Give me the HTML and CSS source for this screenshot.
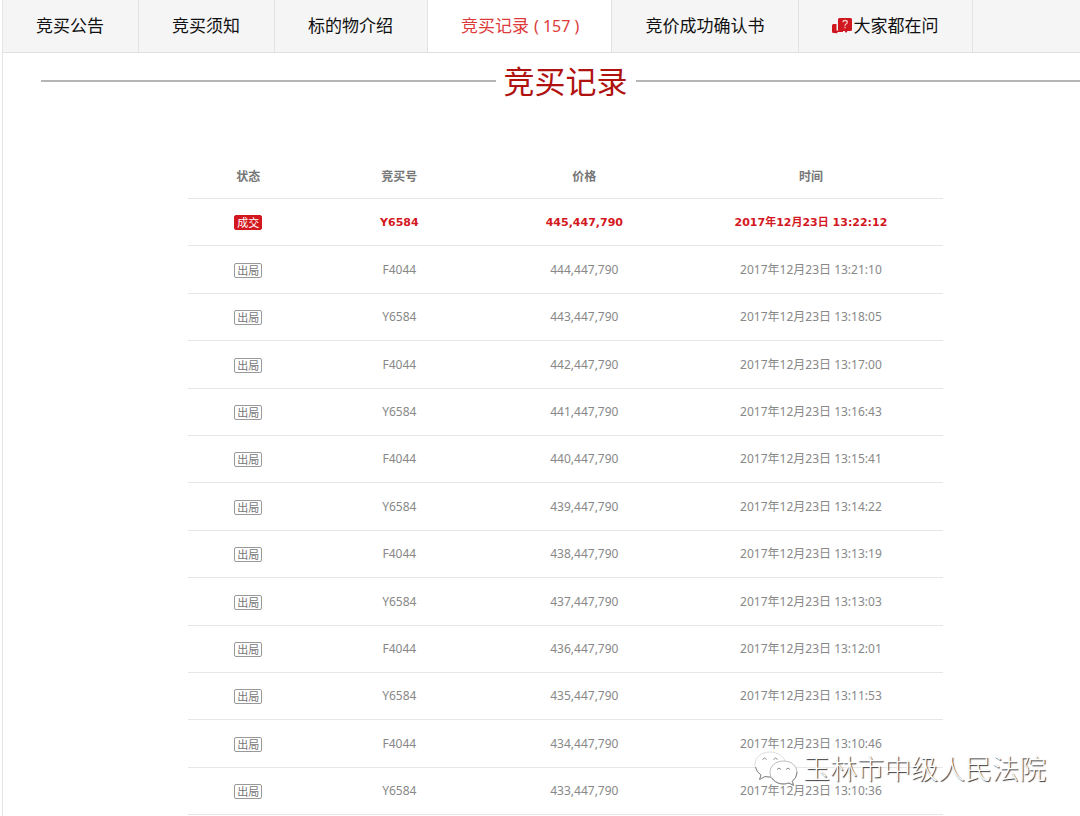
FILE: index.html
```html
<!DOCTYPE html>
<html lang="zh-CN">
<head>
<meta charset="utf-8">
<meta name="viewport" content="width=device-width, initial-scale=1">
<title>竞买记录</title>
<link rel="stylesheet" href="styles.css">
</head>
<body>
<div class="page">
  <nav class="tabs">
    <a class="tab" href="#notice">竞买公告</a>
    <a class="tab" href="#rules">竞买须知</a>
    <a class="tab" href="#item">标的物介绍</a>
    <a class="tab tab-active" href="#records" aria-current="page">竞买记录<span class="count">( 157 )</span></a>
    <a class="tab" href="#confirm">竞价成功确认书</a>
    <a class="tab" href="#questions"><svg class="ask-icon" viewBox="0 0 20 16" aria-hidden="true"><path fill="#d0161f" d="M1.500 6H4.500V12.500H11V14H6L4.500 15.500L3 15H1.500Q0 15 0 13.500V7.500Q0 6 1.500 6Z"/><path fill="#d0161f" d="M7.500 0H18.500Q20 0 20 1.500V11.500Q20 13 18.500 13H15.500L14 15L12.500 13H7.500Q6 13 6 11.500V1.500Q6 0 7.500 0Z"/><path fill="none" stroke="#f7c9c4" stroke-width="1.300" d="M10.800 4.300Q11 2.500 13 2.500Q15.300 2.500 15.300 4.200Q15.300 5.300 14 6Q13 6.500 13 7.800M13 8.800V10.200"/></svg>大家都在问</a>
  </nav>
  <main class="records" id="records">
    <h1 class="title">竞买记录</h1>
    <table class="bids">
      <colgroup><col class="col-state"><col class="col-bidder"><col class="col-price"><col class="col-time"></colgroup>
      <thead>
        <tr><th scope="col">状态</th><th scope="col">竞买号</th><th scope="col">价格</th><th scope="col">时间</th></tr>
      </thead>
      <tbody>
        <tr class="won"><td><span class="badge">成交</span></td><td>Y6584</td><td>445,447,790</td><td>2017年12月23日 13:22:12</td></tr>
        <tr><td><span class="badge">出局</span></td><td>F4044</td><td>444,447,790</td><td>2017年12月23日 13:21:10</td></tr>
        <tr><td><span class="badge">出局</span></td><td>Y6584</td><td>443,447,790</td><td>2017年12月23日 13:18:05</td></tr>
        <tr><td><span class="badge">出局</span></td><td>F4044</td><td>442,447,790</td><td>2017年12月23日 13:17:00</td></tr>
        <tr><td><span class="badge">出局</span></td><td>Y6584</td><td>441,447,790</td><td>2017年12月23日 13:16:43</td></tr>
        <tr><td><span class="badge">出局</span></td><td>F4044</td><td>440,447,790</td><td>2017年12月23日 13:15:41</td></tr>
        <tr><td><span class="badge">出局</span></td><td>Y6584</td><td>439,447,790</td><td>2017年12月23日 13:14:22</td></tr>
        <tr><td><span class="badge">出局</span></td><td>F4044</td><td>438,447,790</td><td>2017年12月23日 13:13:19</td></tr>
        <tr><td><span class="badge">出局</span></td><td>Y6584</td><td>437,447,790</td><td>2017年12月23日 13:13:03</td></tr>
        <tr><td><span class="badge">出局</span></td><td>F4044</td><td>436,447,790</td><td>2017年12月23日 13:12:01</td></tr>
        <tr><td><span class="badge">出局</span></td><td>Y6584</td><td>435,447,790</td><td>2017年12月23日 13:11:53</td></tr>
        <tr><td><span class="badge">出局</span></td><td>F4044</td><td>434,447,790</td><td>2017年12月23日 13:10:46</td></tr>
        <tr><td><span class="badge">出局</span></td><td>Y6584</td><td>433,447,790</td><td>2017年12月23日 13:10:36</td></tr>
      </tbody>
    </table>
  </main>
  <div class="watermark">
    <svg class="wechat" viewBox="0 0 44 36" aria-hidden="true">
      <g fill="#fff" stroke="#aaa" stroke-width="0.800">
        <path stroke="#d4d4d4" d="M16 1C7 1 1 6.500 1 13.500C1 18 3.500 21.500 7 24L5.500 28.500L11 25.500Q14 26.500 18 26.200L32 13C31 6 24 1 16 1Z"/>
        <path d="M29.500 10C21.500 10 16 15.200 16 21.500S21.500 33 29.500 33Q32.500 33 35 32L39.500 34.500L38.300 30.300C41 28 43 25 43 21.500C43 15.200 37.500 10 29.500 10Z"/>
      </g>
      <path fill="none" stroke="#888" stroke-width="1" d="M1.500 16Q2.500 21 7 24L5.500 28.500L11 25.500L17 26.200M18 27C22 33 29 34 35 32L39.500 34.500L38.300 30.300Q43 26.500 43 21M8.500 8.500Q10.500 5.500 12.500 8.500M19.500 8.500Q21.500 5.500 23.500 8.500M23 18.500Q25 15.500 27 18.500M32 18.500Q34 15.500 36 18.500"/>
    </svg>
    <span>玉林市中级人民法院</span>
  </div>
</div>
</body>
</html>
```
FILE: styles.css
```css
* { box-sizing: border-box; }

body {
  margin: 0;
  background: #fff;
  color: #888;
  font: 12px/18px "Noto Sans", "Noto Sans CJK SC", sans-serif;
}

.page {
  position: relative;
  min-height: 100vh;
  margin-left: 2px;
  border-left: 1px solid #e5e5e5;
  overflow: hidden;
}

.tabs {
  display: flex;
  background: #f5f5f5;
  border-bottom: 1px solid #e0e0e0;
}

.tab {
  display: flex;
  align-items: center;
  gap: 1px;
  height: 52px;
  padding: 0 34px 0 33px;
  border-right: 1px solid #e2e2e2;
  color: #111;
  font-size: 17px;
  line-height: 24px;
  text-decoration: none;
  white-space: nowrap;
}

.tab-active {
  gap: 5px;
  padding-right: 32px;
  background: #fff;
  color: #dd3b3b;
}

.count { font-size: 16px; }

.ask-icon {
  width: 20px;
  height: 16px;
}

.records {
  margin-right: -10px;
  padding: 6px 0 0 38px;
}

.title {
  display: flex;
  align-items: center;
  gap: 8px;
  margin: 0 0 48px;
  color: #b0120f;
  font-size: 31px;
  font-weight: 400;
  line-height: 44px;
}

.title::before,
.title::after {
  content: "";
  flex: 1;
  height: 2px;
  background: #b5b5b5;
}

.bids {
  width: 72%;
  margin: 0 auto;
  border-collapse: collapse;
  table-layout: fixed;
  text-align: center;
}

.col-state { width: 16%; }
.col-bidder { width: 24%; }
.col-price { width: 25%; }
.col-time { width: 35%; }

.bids th,
.bids td {
  height: 47px;
  padding: 1px 0 0;
  border-bottom: 1px solid #e6e6e6;
  white-space: nowrap;
}

.bids tbody tr:nth-child(5n+2) td,
.bids tbody tr:nth-child(5n+4) td { height: 48px; }

.bids th {
  padding-top: 6px;
  color: #777;
  font-weight: 700;
}

.bids .won td {
  padding-top: 2px;
  color: #d3171e;
  font-family: "DejaVu Sans", "Noto Sans CJK SC", sans-serif;
  font-size: 11px;
  font-weight: 700;
}

.badge {
  display: inline-block;
  padding: 0 2px;
  border: 1px solid #999;
  border-radius: 2px;
  color: #777;
  font-family: "Noto Sans CJK SC", sans-serif;
  font-size: 11px;
  font-weight: 400;
  line-height: 13px;
  vertical-align: middle;
}

.won .badge {
  border-color: #d3171e;
  background: #d3171e;
  color: #fff;
}

.watermark {
  position: absolute;
  right: 34px;
  bottom: 29px;
  display: flex;
  align-items: center;
  gap: 5px;
  color: #fff;
  font-size: 27px;
  font-weight: 300;
  line-height: 36px;
  text-shadow: 1px 1px 1px #333;
  white-space: nowrap;
}

.wechat {
  width: 44px;
  height: 36px;
}
```
